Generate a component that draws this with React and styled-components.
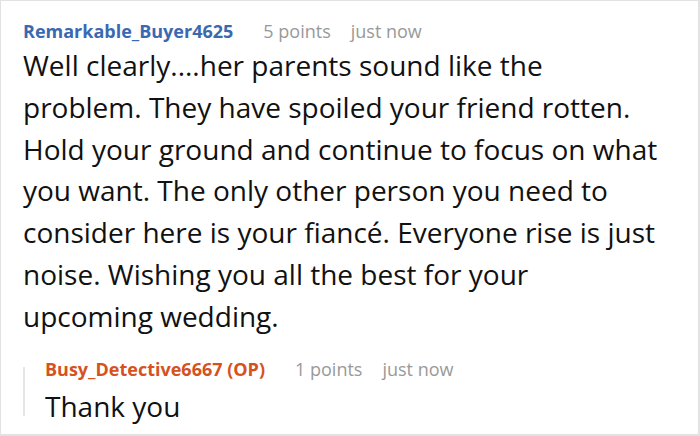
import React from 'react';
import styled, { createGlobalStyle } from 'styled-components';

const GlobalStyle = createGlobalStyle`
  html, body {
    margin: 0;
    padding: 0;
    background: #ffffff;
  }
  body {
    font-family: "Open Sans", "Noto Sans", sans-serif;
  }
`;

const Card = styled.div`
  box-sizing: border-box;
  width: 700px;
  height: 436px;
  border: 1px solid #e2e2e2;
  border-right-width: 2px;
  border-bottom-width: 2px;
  padding: 16px 0 0 22px;
  overflow: hidden;
`;

const Comment = styled.div`
  display: flex;
  flex-direction: column;
`;

const Meta = styled.div`
  display: flex;
  align-items: baseline;
  gap: 20px;
  font-size: 18px;
  line-height: 28px;
`;

const Author = styled.span`
  font-weight: 700;
  color: ${(p) => (p.$op ? '#d5521f' : '#3a69b1')};
  margin-right: 10px;
`;

const Info = styled.span`
  color: #999999;
`;

const Body = styled.p`
  margin: 0;
  font-size: 28px;
  line-height: 41.8px;
  color: #111111;
  max-width: 640px;
`;

const Reply = styled.div`
  position: relative;
  margin-top: 17px;
  padding-left: 22px;
  display: flex;
  flex-direction: column;

  &::before {
    content: '';
    position: absolute;
    left: 0;
    top: 12px;
    bottom: 11px;
    width: 2px;
    background: #e6e6e6;
  }

  ${Body} {
    margin-top: 3px;
  }
`;

export default function App() {
  return (
    <>
      <GlobalStyle />
      <Card>
        <Comment>
          <Meta>
            <Author>Remarkable_Buyer4625</Author>
            <Info>5 points</Info>
            <Info>just now</Info>
          </Meta>
          <Body>
            Well clearly....her parents sound like the problem. They have spoiled your friend rotten. Hold your ground and continue to focus on what you want. The only other person you need to consider here is your fiancé. Everyone rise is just noise. Wishing you all the best for your upcoming wedding.
          </Body>
          <Reply>
            <Meta>
              <Author $op>Busy_Detective6667 (OP)</Author>
              <Info>1 points</Info>
              <Info>just now</Info>
            </Meta>
            <Body>Thank you</Body>
          </Reply>
        </Comment>
      </Card>
    </>
  );
}
